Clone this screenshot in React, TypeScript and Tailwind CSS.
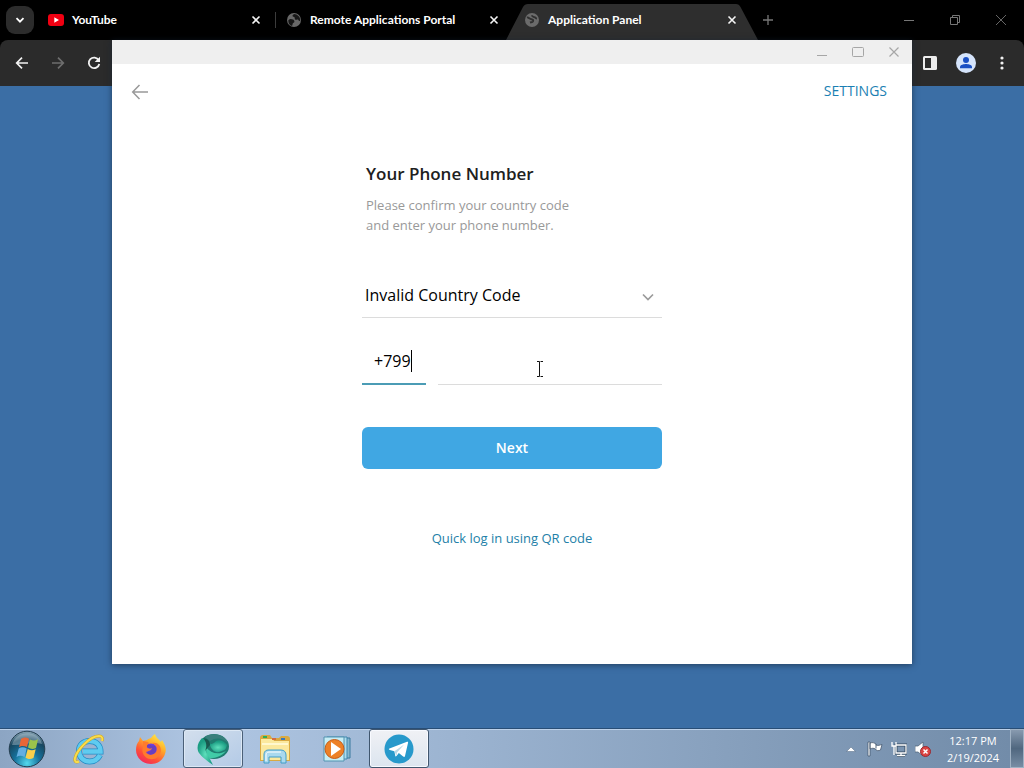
import type { ReactNode } from "react";

function Globe() {
  return (
    <svg className="size-4 shrink-0" viewBox="0 0 16 16" aria-hidden="true">
      <circle cx="8" cy="8" r="7" fill="#686868" />
      <path d="M2.300 8.200C4 6.600 5.600 7 7 7.600c.8.4 1.600 1.200 1.400 2.200-.2 1.200-1.600 1-1.800 2.200-.1.800-.2 1.500-.6 2C3.600 13.300 2.200 11 2.300 8.200z" fill="#171717" />
      <path d="M8 1.900c-.6 1-1.700 1-1.500 2.100.2 1 1.600.6 2.100 1.400.5.800-.3 1.600.6 2.200 1.100.7 1.800-.6 2.800 0 .8.500.6 1.500 1.300 1.500.5 0 .8-.6.9-1.100C14.200 4.800 11.600 2 8 1.900z" fill="#171717" />
    </svg>
  );
}

function DimGlobe() {
  return (
    <svg className="size-4 shrink-0" viewBox="0 0 16 16" aria-hidden="true">
      <circle cx="8" cy="8" r="7" fill="#6b6b6b" />
      <path d="M3 5.600C4.500 4.800 5.500 7 7.500 7.200c1.500.2 2 1 1.500 2.100-.5 1-2 .8-3 1.200M8 3.200c0 1.600 1.600 1.400 2.600 2 .9.500 1.300 1.200 2.400 1.300" fill="none" stroke="#303030" strokeWidth="1.900" />
    </svg>
  );
}

function YouTube() {
  return (
    <svg className="size-4 shrink-0" viewBox="0 0 16 16" aria-hidden="true">
      <rect x="0" y="2" width="16" height="12" rx="3" fill="#f00012" />
      <path d="M6.300 5.300v5.400L11 8z" fill="#fff" />
    </svg>
  );
}

function Close() {
  return (
    <svg className="size-4" viewBox="0 0 16 16" fill="none" stroke="#f5f5f5" strokeWidth="1.600" aria-hidden="true">
      <path d="M4.500 4.500l7 7M11.500 4.500l-7 7" />
    </svg>
  );
}

function Tab({ title, icon, active = false, divider = false }: { title: string; icon: ReactNode; active?: boolean; divider?: boolean }) {
  return (
    <div className="relative flex h-full w-[238px] shrink-0 items-center">
      {active && (
        <svg className="absolute -left-3 top-0 h-10 w-[254px]" viewBox="0 0 254 40" aria-hidden="true">
          <path d="M0 40L17 7Q18.500 4 22 4H230Q233 4 234.500 7L252 40Z" fill="#2e2e2e" />
        </svg>
      )}
      <div className="relative flex w-full items-center gap-2 pl-[6px]">
        {icon}
        <span className="min-w-0 flex-1 whitespace-nowrap font-['Lato','Open_Sans',sans-serif] text-xs font-bold text-white">{title}</span>
        <button type="button" aria-label={"Close " + title} className="mr-4">
          <Close />
        </button>
      </div>
      {divider && <span className="absolute right-1 h-4 w-px bg-[#3c3c3c]" />}
    </div>
  );
}

function TabStrip() {
  return (
    <header className="flex h-10 items-center bg-black">
      <button type="button" aria-label="Search tabs" className="ml-1.5 mr-2 flex size-7 shrink-0 items-center justify-center rounded-[9px] bg-[#2c2c2c]">
        <svg className="size-4" viewBox="0 0 16 16" fill="none" stroke="#fff" strokeWidth="1.800" aria-hidden="true">
          <path d="M4.500 6.200L8 9.700l3.500-3.500" />
        </svg>
      </button>
      <div className="flex h-full items-center">
        <Tab title="YouTube" icon={<YouTube />} divider />
        <Tab title="Remote Applications Portal" icon={<Globe />} />
        <Tab title="Application Panel" icon={<DimGlobe />} active />
      </div>
      <button type="button" aria-label="New tab" className="ml-1">
        <svg className="size-4" viewBox="0 0 16 16" fill="none" stroke="#777" strokeWidth="1.300" aria-hidden="true">
          <path d="M8 3v10M3 8h10" />
        </svg>
      </button>
      <div className="ml-auto flex items-center">
        <button type="button" aria-label="Minimize browser" className="flex w-[46px] justify-center">
          <svg className="size-4" viewBox="0 0 16 16" stroke="#777" aria-hidden="true"><path d="M3 8.500h10" /></svg>
        </button>
        <button type="button" aria-label="Restore browser" className="flex w-[46px] justify-center">
          <svg className="size-4" viewBox="0 0 16 16" fill="none" stroke="#777" aria-hidden="true"><path d="M3.500 5.500h7v7h-7zM5.500 5.500v-2h7v7h-2" /></svg>
        </button>
        <button type="button" aria-label="Close browser" className="flex w-[46px] justify-center">
          <svg className="size-4" viewBox="0 0 16 16" stroke="#666" aria-hidden="true"><path d="M3 3l10 10M13 3L3 13" /></svg>
        </button>
      </div>
    </header>
  );
}

function Toolbar() {
  return (
    <div className="bg-black">
      <nav className="flex h-[46px] items-center rounded-t-lg bg-[#2b2b2b] pl-3.5 pr-3.5">
        <div className="flex gap-5">
          <button type="button" aria-label="Back">
            <svg className="size-4" viewBox="0 0 16 16" fill="none" stroke="#f2f2f2" strokeWidth="1.700" aria-hidden="true"><path d="M14 8H3M8 2.700L2.700 8 8 13.300" /></svg>
          </button>
          <button type="button" aria-label="Forward">
            <svg className="size-4" viewBox="0 0 16 16" fill="none" stroke="#6e6e6e" strokeWidth="1.700" aria-hidden="true"><path d="M2 8h11M8 2.700L13.300 8 8 13.300" /></svg>
          </button>
          <button type="button" aria-label="Reload">
            <svg className="size-4" viewBox="0 0 16 16" fill="none" aria-hidden="true">
              <path d="M12.700 5.200A5.300 5.300 0 1 0 13.300 9" stroke="#f2f2f2" strokeWidth="1.800" />
              <path d="M14 1.700V7H8.700z" fill="#f2f2f2" />
            </svg>
          </button>
        </div>
        <div className="ml-auto flex items-center gap-[18px]">
          <button type="button" aria-label="Side panel">
            <svg className="size-4" viewBox="0 0 16 16" aria-hidden="true"><rect x="1" y="1" width="14" height="14" rx="1.500" fill="#ececec" /><path d="M3 3h6v10H3z" fill="#2b2b2b" /></svg>
          </button>
          <button type="button" aria-label="Profile">
            <svg className="size-5" viewBox="0 0 20 20" aria-hidden="true"><circle cx="10" cy="10" r="10" fill="#d5e4fb" /><circle cx="10" cy="7" r="3" fill="#194fc4" /><path d="M4 15.200V14c0-2.200 4-3 6-3s6 .8 6 3v1.200z" fill="#194fc4" /></svg>
          </button>
          <button type="button" aria-label="Browser menu">
            <svg className="size-4" viewBox="0 0 16 16" fill="#f2f2f2" aria-hidden="true"><circle cx="8" cy="3" r="1.600" /><circle cx="8" cy="8" r="1.600" /><circle cx="8" cy="13" r="1.600" /></svg>
          </button>
        </div>
      </nav>
    </div>
  );
}

function LoginWindow() {
  return (
    <main className="absolute left-1/2 top-10 flex min-h-[624px] w-[800px] max-w-full -translate-x-1/2 flex-col bg-white shadow-[0_1px_6px_rgba(20,35,55,0.65)]">
      <div className="flex h-6 items-center justify-end gap-5 bg-[#efefef] pr-2.5 text-[#a6a6a6]">
        <button type="button" aria-label="Minimize">
          <svg className="size-4" viewBox="0 0 16 16" stroke="currentColor" aria-hidden="true"><path d="M3 11.500h10" /></svg>
        </button>
        <button type="button" aria-label="Maximize">
          <svg className="size-4" viewBox="0 0 16 16" fill="none" stroke="currentColor" aria-hidden="true"><rect x="2.500" y="3.500" width="11" height="9" rx="1" /></svg>
        </button>
        <button type="button" aria-label="Close window">
          <svg className="size-4" viewBox="0 0 16 16" stroke="currentColor" strokeWidth="1.200" aria-hidden="true"><path d="M3.500 3.500l9 9M12.500 3.500l-9 9" /></svg>
        </button>
      </div>
      <div className="flex h-14 items-center justify-between pl-4 pr-[25px]">
        <button type="button" aria-label="Go back">
          <svg className="size-6" viewBox="0 0 24 24" fill="none" stroke="#999" strokeWidth="1.500" aria-hidden="true"><path d="M20 12H5M11.500 5L4.700 12l6.800 7" /></svg>
        </button>
        <a href="#settings" className="pb-0.5 text-sm text-[#1b7fb3]">SETTINGS</a>
      </div>
      <form className="mx-auto flex w-[300px] flex-col pt-10" onSubmit={(e) => e.preventDefault()}>
        <h1 className="pl-1 text-[17px] font-semibold leading-7 text-[#202020]">Your Phone Number</h1>
        <p className="mt-[7px] pl-1 text-[13px] leading-5 text-[#999]">
          Please confirm your country code
          <br />
          and enter your phone number.
        </p>
        <div className="mt-[37px] flex h-[46px] items-center border-b border-[#dcdcdc] pr-1.5">
          <select aria-label="Country" className="min-w-0 flex-1 appearance-none bg-transparent pl-[3px] text-base text-black outline-none">
            <option>Invalid Country Code</option>
          </select>
          <svg className="pointer-events-none size-4" viewBox="0 0 16 16" fill="none" stroke="#9b9b9b" strokeWidth="1.700" aria-hidden="true"><path d="M3 7.500l5 5 5-5" /></svg>
        </div>
        <div className="mt-5 flex items-start gap-3">
          <div className="flex h-[47px] w-16 items-center border-b-2 border-[#4b9cb5] pl-3">
            <input aria-label="Country code" className="w-[37px] bg-transparent text-base text-black outline-none" defaultValue="+799" />
            <span className="h-[22px] w-px bg-black" />
          </div>
          <div className="flex h-[47px] min-w-0 flex-1 border-b border-[#dcdcdc]">
            <input aria-label="Phone number" type="tel" className="w-full bg-transparent px-1 text-base text-black outline-none" />
          </div>
        </div>
        <button type="submit" className="mt-[42px] h-[42px] rounded-md bg-[#40a7e3] text-sm font-semibold text-white">Next</button>
        <a href="#qr" className="mt-[59px] self-center text-[13px] leading-5 text-[#237fa8]">Quick log in using QR code</a>
      </form>
      <svg className="pointer-events-none absolute left-[423px] top-[321px] h-4 w-[10px]" viewBox="0 0 10 16" fill="none" stroke="#111" aria-hidden="true">
        <path d="M2 .5h2.500v15H2M8 .5H5.500M8 15.500H5.500" />
      </svg>
    </main>
  );
}

function StartIcon() {
  return (
    <svg className="size-[38px]" viewBox="0 0 38 38" aria-hidden="true">
      <defs>
        <radialGradient id="orb" cx=".5" cy=".9" r=".9"><stop offset="0" stopColor="#55d9ed" /><stop offset=".4" stopColor="#15719c" /><stop offset=".75" stopColor="#17465f" /><stop offset="1" stopColor="#8ea9b9" /></radialGradient>
      </defs>
      <circle cx="19" cy="19" r="17.800" fill="url(#orb)" stroke="#243e50" />
      <path d="M4 15C7 4 18 1 27 5c4 2 6 5 7 9-9-3-17 1-30 1z" fill="#d5e3ea" opacity=".35" />
      <path d="M13 9c3-2 5-2 8-.3L19 17c-3-1.500-6-1.500-8 .3z" fill="#e76638" />
      <path d="M22 9.500c3 1.400 5 1.400 8-.2L28 18c-3 1.300-5 1.200-8-.4z" fill="#9ac34b" />
      <path d="M10.700 18.500c3-1.600 5-1.500 8 0L16.500 27c-3-1.500-5-1.600-8 0z" fill="#63aee1" />
      <path d="M19.700 19c3 1.500 5 1.600 8 .2L25.500 28c-3 1.400-5 1.300-8-.3z" fill="#f8cf4c" />
    </svg>
  );
}

function ExplorerIcon() {
  return (
    <svg className="size-8" viewBox="0 0 32 32" fill="none" aria-hidden="true">
      <path d="M27 22c-2 4-6 6.500-10.500 6.500C10.500 28.500 6 24 6 18S10.500 8 16.500 8C23.500 8 27.500 12.500 27.500 18.500H10" stroke="#258cc5" strokeWidth="6" />
      <path d="M27 22c-2 4-6 6.500-10.500 6.500C10.500 28.500 6 24 6 18S10.500 8 16.500 8C23.500 8 27.500 12.500 27.500 18.500H10" stroke="#5fcbf0" strokeWidth="4.500" />
      <path d="M29 8c1-3 0-5-3-5C17 3 4 17 2 25c-.8 3 .7 5 4 3.500" stroke="#d3a51c" strokeWidth="3" />
      <path d="M29 8c1-3 0-5-3-5C17 3 4 17 2 25c-.8 3 .7 5 4 3.500" stroke="#f8dc4c" strokeWidth="2" />
    </svg>
  );
}

function FirefoxIcon() {
  return (
    <svg className="size-8" viewBox="0 0 32 32" aria-hidden="true">
      <defs><linearGradient id="fox" x1=".8" y1="0" x2=".2" y2="1"><stop stopColor="#fff04a" /><stop offset=".35" stopColor="#ffad29" /><stop offset=".7" stopColor="#ff5037" /><stop offset="1" stopColor="#ef2464" /></linearGradient></defs>
      <path d="M20 1c1 4 4 5 6 8l1-2c3 5 5 9 3 14-2 6-7 10-14 10C8 31 1 25 1 17c0-4 1-7 3-9l1-4 3 4 4-1c1-1 3-2 4-2 1-1 2-3 4-4z" fill="url(#fox)" />
      <circle cx="16" cy="17.500" r="7" fill="#713edc" />
      <path d="M8 8c2 1 4 0 6 2l-2 3c-1 2 2 3 5 2-1 3-4 3-6 4 2 4 8 3 10 0 2-4 0-7-4-9 5-1 9 2 9 8-1 6-6 9-11 8-6-1-9-7-7-12z" fill="#ff7b2c" />
      <path d="M12 12c3-1 5 1 8 1 2 3 1 7-2 8-3 1-5 0-6-2 3 0 5-1 5-4-2 1-5 0-5-3z" fill="#6840bd" />
    </svg>
  );
}

function GreenBirdIcon() {
  return (
    <svg className="size-8" viewBox="0 0 32 32" aria-hidden="true">
      <defs><radialGradient id="bird" cx=".5" cy=".6"><stop stopColor="#5ee0bc" /><stop offset="1" stopColor="#1b9d83" /></radialGradient></defs>
      <ellipse cx="17" cy="13.500" rx="15" ry="12.500" fill="#207c70" />
      <path d="M8 4C14-1 28 1 31 10c-5-5-12-6-18-2z" fill="#397f7c" />
      <path d="M12 9c1 3 4 2 6 0 4-3 9-1 12 3-1 4-2 5-5 6-6 3-11 0-13-9z" fill="url(#bird)" />
      <path d="M9 14c5 7 13 8 20 4-4 5-11 8-19 7z" fill="#41cba7" />
      <path d="M5 5C1 9-1 15 2 20c3 4 7 7 14 12l-4-8c-4-5-3-8 0-12 1-3-2-5-7-7z" fill="url(#bird)" />
      <path d="M6 5c5 1 7 3 7 7l-5 6c2-4 2-9-2-13z" fill="#19584f" />
    </svg>
  );
}

function FolderIcon() {
  return (
    <svg className="size-8" viewBox="0 0 32 32" aria-hidden="true">
      <path d="M1 5c0-2 1-3 3-3h7l2 3h7l2-2h6c2 0 3 1 3 3v22H1z" fill="#d8aa43" />
      <path d="M2 6h12l1 2h15v19H2z" fill="#fbe99e" />
      <path d="M3 10h26v2H3z" fill="#fff8cf" />
      <path d="M4 3h4v2H4z" fill="#2faf54" /><path d="M13 5h4v2h-4z" fill="#d66c3f" /><path d="M22 5h4v2h-4z" fill="#3977ba" />
      <path d="M5 30v-8c0-4 2-5 5-5h12c3 0 5 2 5 5v8h-5v-6H10v6z" fill="#a9d9ee" stroke="#419dc8" />
      <path d="M7 28v-6c0-2 1-3 3-3h12" fill="none" stroke="#fff" />
    </svg>
  );
}

function MediaIcon() {
  return (
    <svg className="size-8" viewBox="0 0 32 32" aria-hidden="true">
      <path d="M9 5h20v20H9z" fill="#84b6ce" stroke="#3a7a9e" /><path d="M6 4h20v22H6z" fill="#addced" stroke="#4088ae" /><path d="M3 4h20v24H3z" fill="#c6edf4" stroke="#5293b0" />
      <circle cx="13.500" cy="16" r="9.500" fill="#ed8127" stroke="#c65d19" /><path d="M10 9v14l10-7z" fill="#fff" />
    </svg>
  );
}

function TelegramIcon() {
  return (
    <svg className="size-[30px]" viewBox="0 0 30 30" aria-hidden="true">
      <circle cx="15" cy="15" r="14.500" fill="#2799cb" />
      <path d="M5.500 14.500L23 7.800c1-.4 1.300.2 1 1.200L21 22c-.3 1.300-1 1.200-1.800.6L14.800 19l-2.300 3c-.8.8-1.200.3-1.300-.5l-.8-4.200-4.600-1.400c-1.200-.4-1.200-.9-.3-1.400z" fill="#fff" />
      <path d="M10.400 17.300l9.800-6.800-7.200 8-.6 3.500z" fill="#b9d9e7" />
    </svg>
  );
}

function Taskbar() {
  return (
    <footer className="relative flex h-10 items-stretch border-t border-[#294e76] bg-linear-to-r from-[#8ca5c3] via-[#afc6e3] via-20% to-[#718ba8] shadow-[inset_0_1px_0_#bdd1e9]">
      <button type="button" aria-label="Start" className="ml-2 flex w-[50px] items-center"><StartIcon /></button>
      <div className="flex">
        <button type="button" aria-label="Internet Explorer" className="flex w-[62px] items-center justify-center"><ExplorerIcon /></button>
        <button type="button" aria-label="Firefox" className="flex w-[62px] items-center justify-center"><FirefoxIcon /></button>
        <button type="button" aria-label="Remote application" className="mx-px flex w-[60px] items-center justify-center rounded-[3px] border border-[#4b6078] bg-linear-to-br from-[#d3dfed] to-[#b3cae6] shadow-[inset_0_0_0_1px_#dce8f5]"><GreenBirdIcon /></button>
        <button type="button" aria-label="File Explorer" className="flex w-[62px] items-center justify-center"><FolderIcon /></button>
        <button type="button" aria-label="Media player" className="flex w-[62px] items-center justify-center"><MediaIcon /></button>
        <button type="button" aria-label="Telegram" className="mx-px flex w-[60px] items-center justify-center rounded-[3px] border border-[#40566e] bg-linear-to-b from-[#f0f1f5] to-[#dce5ef] shadow-[inset_0_0_0_1px_#f8faff]"><TelegramIcon /></button>
      </div>
      <div className="ml-auto flex items-center">
        <button type="button" aria-label="Show hidden icons" className="mr-2">
          <svg className="size-4" viewBox="0 0 16 16" aria-hidden="true"><path d="M3.500 10.500L8 6l4.500 4.500z" fill="#fff" stroke="#506780" strokeWidth=".5" /></svg>
        </button>
        <div className="flex gap-2">
          <button type="button" aria-label="Action center">
            <svg className="size-4" viewBox="0 0 16 16" aria-hidden="true"><path d="M1 1h2v14H1zM3 2c3-1 4 0 6 1v1c2 1 4 0 6-.5L13.500 9C12 10 9 10 8.500 8 6.500 7 5 7 3 8z" fill="#fff" stroke="#45586e" strokeWidth=".8" /><path d="M9 3.500v4" stroke="#52677e" /></svg>
          </button>
          <button type="button" aria-label="Network">
            <svg className="size-4" viewBox="0 0 16 16" fill="none" aria-hidden="true"><path d="M5 4h10v8H5zM10 12v2M6 14.500h8" stroke="#354b61" strokeWidth="3" /><path d="M5 4h10v8H5zM10 12v2M6 14.500h8M1 1v4h4V1M3 5v9" stroke="#fff" strokeWidth="1.300" /></svg>
          </button>
          <button type="button" aria-label="Sound muted">
            <svg className="size-4" viewBox="0 0 16 16" fill="none" aria-hidden="true"><path d="M0 5h3l5-4v14l-5-4H0z" fill="#fff" stroke="#4b5f74" strokeWidth=".7" /><circle cx="10.500" cy="10.500" r="5" fill="#dc4442" stroke="#982b32" /><path d="M8.500 8.500l4 4m0-4l-4 4" stroke="#fff" strokeWidth="1.500" /></svg>
          </button>
        </div>
        <time dateTime="2024-02-19T12:17" className="ml-4 mr-[11px] text-center text-[11px] leading-[17px] text-white">
          <span className="block">12:17 PM</span>
          <span className="block">2/19/2024</span>
        </time>
        <button type="button" aria-label="Show desktop" className="h-full w-[14px] border border-[#a0b2c4] bg-linear-to-b from-[#889aaf] via-[#50677f] to-[#778da4]" />
      </div>
    </footer>
  );
}

export default function App() {
  return (
    <div className="relative flex min-h-screen flex-col bg-[#3b6ea5] font-['Open_Sans','Noto_Sans',sans-serif]">
      <TabStrip />
      <Toolbar />
      <div className="min-h-[580px] flex-1" />
      <LoginWindow />
      <Taskbar />
    </div>
  );
}
